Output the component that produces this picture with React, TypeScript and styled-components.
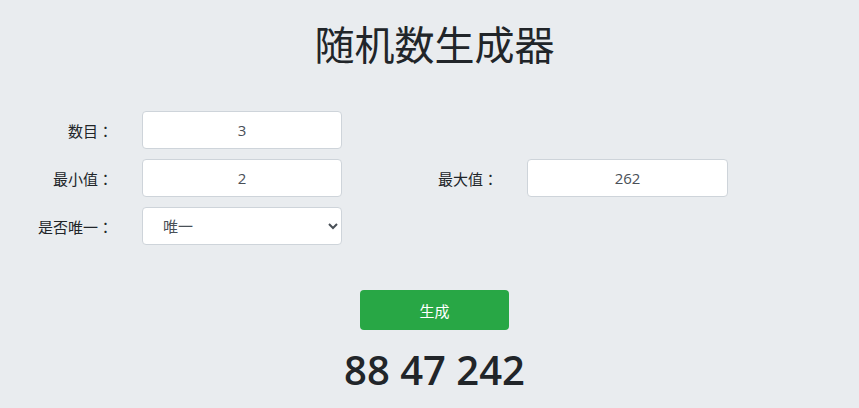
import React, { useState } from "react";
import styled, { createGlobalStyle } from "styled-components";

const GlobalStyle = createGlobalStyle`
  html, body {
    margin: 0;
    padding: 0;
    background: #e9ecef;
    color: #212529;
    font-family: "Open Sans", "Noto Sans CJK JP", sans-serif;
  }
`;

const Page = styled.div`
  display: flex;
  flex-direction: column;
  min-height: 408px;
`;

const Centered = styled.div<{ $top: number }>`
  display: flex;
  flex-direction: column;
  align-items: center;
  padding-left: 10px;
  margin-top: ${(p) => p.$top}px;
`;

const Title = styled.h1`
  margin: 0;
  font-size: 40px;
  font-weight: 400;
  line-height: 48px;
  color: #212529;
`;

const Form = styled.div`
  display: grid;
  grid-template-columns: 113px 200px 127px 201px;
  column-gap: 29px;
  row-gap: 10px;
  margin-top: 42px;
  align-items: center;
`;

const Label = styled.label`
  font-size: 15px;
  text-align: right;
  color: #212529;
  white-space: nowrap;
`;

const Input = styled.input`
  box-sizing: border-box;
  width: 100%;
  height: 38px;
  border: 1px solid #ced4da;
  border-radius: 4px;
  background: #fff;
  text-align: center;
  font-family: "Open Sans", "Noto Sans CJK JP", sans-serif;
  font-size: 15px;
  color: #495057;
  outline: none;
`;

const Select = styled.select`
  box-sizing: border-box;
  width: 100%;
  height: 38px;
  border: 1px solid #ced4da;
  border-radius: 4px;
  background: #fff;
  padding: 0 6px 0 16px;
  font-family: "Open Sans", "Noto Sans CJK JP", sans-serif;
  font-size: 15px;
  color: #495057;
  outline: none;
`;

const Spacer = styled.div``;

const Button = styled.button`
  width: 149px;
  height: 40px;
  border: none;
  border-radius: 4px;
  background: #28a745;
  color: #fff;
  font-family: "Open Sans", "Noto Sans CJK JP", sans-serif;
  font-size: 15px;
  cursor: pointer;
`;

const Result = styled.div`
  margin-top: 15px;
  font-size: 40px;
  font-weight: 600;
  line-height: 50px;
  color: #212529;
`;

export default function App() {
  const [count, setCount] = useState("3");
  const [min, setMin] = useState("2");
  const [max, setMax] = useState("262");
  const [unique, setUnique] = useState("1");
  const [result, setResult] = useState("88 47 242");

  const generate = () => {
    const n = parseInt(count, 10) || 0;
    const lo = parseInt(min, 10) || 0;
    const hi = parseInt(max, 10) || 0;
    const out: number[] = [];
    let guard = 0;
    while (out.length < n && guard < 10000) {
      guard++;
      const v = lo + Math.floor(Math.random() * (hi - lo + 1));
      if (unique === "1" && out.includes(v)) continue;
      out.push(v);
    }
    setResult(out.join(" "));
  };

  return (
    <Page>
      <GlobalStyle />
      <Centered $top={21}>
        <Title>随机数生成器</Title>
      </Centered>
      <Form>
        <Label>数目：</Label>
        <Input value={count} onChange={(e) => setCount(e.target.value)} />
        <Spacer />
        <Spacer />
        <Label>最小值：</Label>
        <Input value={min} onChange={(e) => setMin(e.target.value)} />
        <Label>最大值：</Label>
        <Input value={max} onChange={(e) => setMax(e.target.value)} />
        <Label>是否唯一：</Label>
        <Select value={unique} onChange={(e) => setUnique(e.target.value)}>
          <option value="1">唯一</option>
          <option value="0">不唯一</option>
        </Select>
      </Form>
      <Centered $top={45}>
        <Button onClick={generate}>生成</Button>
        <Result>{result}</Result>
      </Centered>
    </Page>
  );
}
